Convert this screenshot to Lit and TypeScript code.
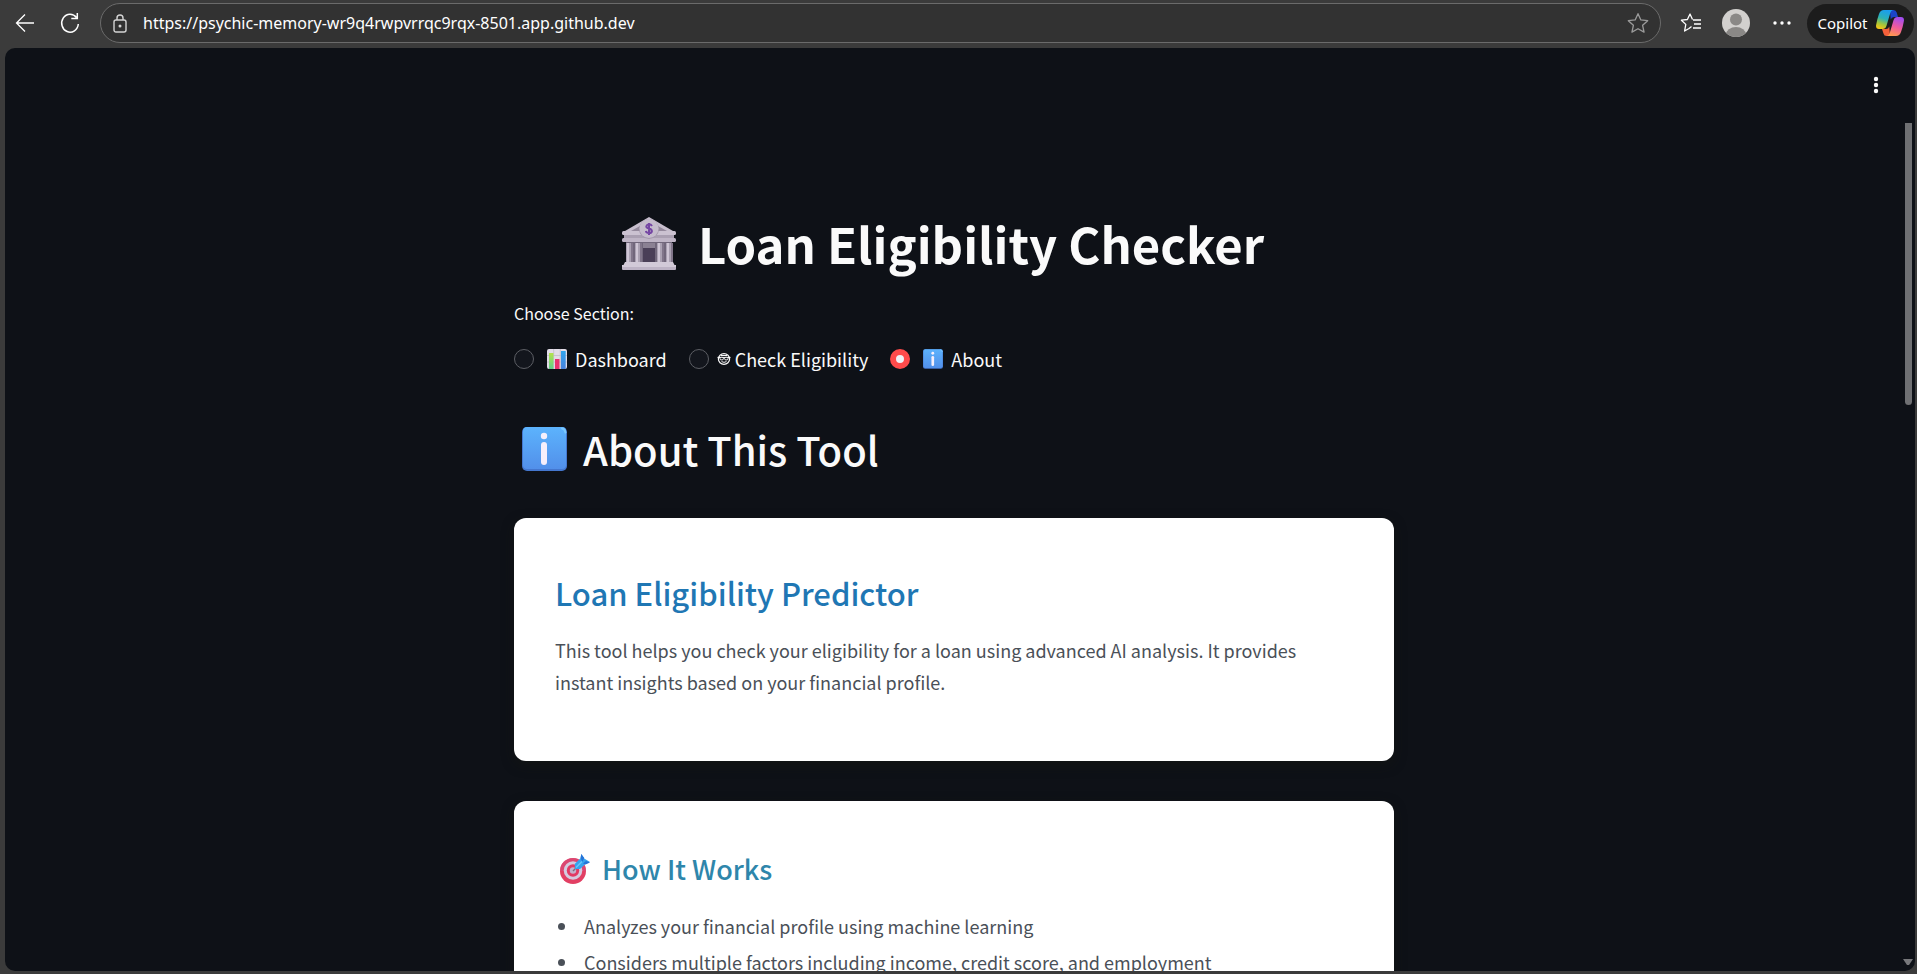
import { LitElement, html, css, svg } from "lit";
import { customElement, state } from "lit/decorators.js";

const infoIcon = html`<svg class="emoji" viewBox="0 0 45 44" aria-hidden="true">
  <defs>
    <linearGradient id="info-face" x1="0" y1="0" x2="0" y2="1">
      <stop offset="0" stop-color="#5cb3fd" />
      <stop offset="1" stop-color="#5290ea" />
    </linearGradient>
  </defs>
  <rect width="45" height="44" rx="5" fill="#4477cf" />
  <rect x="1" width="43" height="42" rx="4" fill="url(#info-face)" />
  <path d="M40 1.5q3 .5 3.500 4" stroke="#7cc9ff" stroke-width="2" fill="none" stroke-linecap="round" />
  <circle cx="22" cy="9" r="3.200" fill="#f6effb" />
  <rect x="19" y="15" width="6" height="23" rx="3" fill="#f6effb" />
</svg>`;

const chartIcon = html`<svg class="emoji" viewBox="0 0 20 20" aria-hidden="true">
  <defs>
    <linearGradient id="bar-green" x1="0" y1="0" x2="0" y2="1">
      <stop offset="0" stop-color="#b4e34c" />
      <stop offset="1" stop-color="#5fd08a" />
    </linearGradient>
    <linearGradient id="bar-blue" x1="0" y1="0" x2="0" y2="1">
      <stop offset="0" stop-color="#2fa5ee" />
      <stop offset="1" stop-color="#4a83dc" />
    </linearGradient>
  </defs>
  <rect width="20" height="20" rx="2" fill="#e2dde8" />
  <path d="M0 6.500h20M0 13h20M6.700 0v20M13.300 0v20" stroke="#c3bccb" stroke-width=".8" />
  <rect x="2" y="4" width="4.500" height="16" fill="url(#bar-green)" />
  <rect x="8" y="10" width="4.500" height="10" fill="#e8336f" />
  <rect x="14" y="2" width="4.700" height="18" fill="url(#bar-blue)" />
</svg>`;

const faceIcon = html`<svg class="face" viewBox="0 0 14 12" aria-hidden="true">
  <ellipse cx="7" cy="6" rx="5.600" ry="5.300" fill="none" stroke="#fafafa" stroke-width="1.200" />
  <path d="M.5 4.500h13" stroke="#fafafa" stroke-width="1.200" />
  <rect x="3" y="4.300" width="3.400" height="2.600" rx="1.200" fill="#0e1117" stroke="#fafafa" />
  <rect x="7.600" y="4.300" width="3.400" height="2.600" rx="1.200" fill="#0e1117" stroke="#fafafa" />
  <path d="M4.500 8.600q2.500 1.500 5 0M4 2.500h6" fill="none" stroke="#fafafa" />
</svg>`;

const column = (x: number) => svg`
  <rect x=${x} y="26" width="6" height="20" fill="#aaa1b2" />
  <rect x=${x + 1} y="26" width="2" height="20" fill="#cfc6d5" />
  <rect x=${x + 5} y="26" width="2" height="20" fill="#81768a" />`;

const bankIcon = html`<svg class="emoji" viewBox="0 0 54 53" aria-hidden="true">
  <rect x="4" y="24" width="46" height="23" fill="#71677b" />
  ${column(4)}${column(13)}${column(35)}${column(44)}
  <rect x="21" y="26" width="12" height="20" fill="#8b8193" />
  <rect x="21" y="31" width="12" height="15" fill="#4a3f57" />
  <path d="M27 0 51 14H3z" fill="#c8bfce" />
  <path d="M27 4 45 14H9z" fill="#94899c" />
  <rect y="14" width="54" height="4" rx="1.500" fill="#cbc2d1" />
  <rect x="2" y="18" width="50" height="4" fill="#aaa0b2" />
  <rect y="21" width="54" height="4" rx="1.500" fill="#bfb5c6" />
  <circle cx="27" cy="12" r="10" fill="#a499ad" />
  <circle cx="27" cy="11.500" r="9.500" fill="#c5bccc" />
  <path d="M30 9q-1-1.700-3-1.700t-2.700 2q0 1.700 2.700 2.300t2.900 2.500q-.2 2-2.900 2t-3.200-2M27 6v12" fill="none" stroke="#7546a4" stroke-width="2" />
  <path d="M3 45h48l2 4H1z" fill="#d2cad8" />
  <rect y="48" width="54" height="5" rx="1" fill="#bdb3c5" />
  <rect y="48" width="54" height="2" fill="#d2cad8" />
</svg>`;

const targetIcon = html`<svg class="emoji" viewBox="0 0 30 30" aria-hidden="true">
  <circle cx="13" cy="17" r="13" fill="#e23f63" />
  <path d="M0 17a13 13 0 0 1 26 0z" fill="#d94a78" opacity=".7" />
  <circle cx="13" cy="16.500" r="9.300" fill="#d5cadf" />
  <circle cx="13" cy="16.500" r="6.200" fill="#e23a64" />
  <circle cx="13" cy="16.500" r="3.200" fill="#c4b2cd" />
  <path d="m13 17 7-7" stroke="#76707f" stroke-width="1.500" />
  <path d="m15 15-.3-5 6-6 .5-4 3 4.500L30 8l-4.500 2-5.500 5z" fill="#35a3ee" />
  <path d="m20.500 4 .8-4 3 4-2 4zM23 9.500l3-2.500 4 1.500-4.500 2z" fill="#2574d8" />
  <path d="m16 13.500 6-6" stroke="#67c8fa" stroke-width="1.500" />
</svg>`;

const copilotIcon = html`<svg class="copilot-logo" viewBox="0 0 28 26" aria-hidden="true">
  <defs>
    <linearGradient id="cp-left" x1=".6" y1="0" x2=".3" y2="1">
      <stop offset="0" stop-color="#1a9df0" />
      <stop offset=".45" stop-color="#2bb1b6" />
      <stop offset=".75" stop-color="#a4c63a" />
      <stop offset="1" stop-color="#f5c518" />
    </linearGradient>
    <linearGradient id="cp-right" x1=".6" y1="0" x2=".3" y2="1">
      <stop offset="0" stop-color="#a24df0" />
      <stop offset=".5" stop-color="#ee5a9d" />
      <stop offset="1" stop-color="#ff9a4d" />
    </linearGradient>
  </defs>
  <path d="M14 0h3.500q2.500 0 3.200 2.500L22 7h-4q-2.500 0-3.300 2.500z" fill="#1b45c9" />
  <path d="M14 26h-3.500q-2.500 0-3-2.500L6 19h4q2.500 0 3.300-2.500z" fill="#f4603a" />
  <path d="M8 0h9q-2 .5-2.800 3.300l-3.700 12.500Q9.500 19 6.500 19H3Q-.7 19 .2 14.500 1 9.500 3 4 4.300 0 8 0z" fill="url(#cp-left)" />
  <path d="M20 26h-9q2-.5 2.800-3.300l3.700-12.500Q18.500 7 21.500 7H25q3.700 0 2.800 4.500-.8 5-2.800 10.500-1.300 4-5 4z" fill="url(#cp-right)" />
</svg>`;

const starPath = "m10 1.500 2.600 5.700 6.200.7-4.600 4.200 1.300 6.200L10 15.200l-5.500 3.100 1.300-6.200L1.200 7.900l6.200-.7z";

const sections = [
  { id: "dashboard", label: "Dashboard", icon: chartIcon, tight: false },
  { id: "check", label: "Check Eligibility", icon: faceIcon, tight: true },
  { id: "about", label: "About", icon: infoIcon, tight: false },
];

@customElement("browser-bar")
class BrowserBar extends LitElement {
  static styles = css`
    :host {
      display: flex;
      align-items: center;
      height: 48px;
      padding: 0 3px 2px 8px;
      box-sizing: border-box;
      color: #fff;
      font-family: "Noto Sans", sans-serif;
    }
    button {
      display: flex;
      align-items: center;
      justify-content: center;
      flex: none;
      border: 0;
      padding: 0;
      background: none;
      color: inherit;
      font: inherit;
    }
    svg { display: block; fill: none; stroke: currentColor; }
    .nav { width: 34px; height: 34px; margin-right: 11px; }
    .address {
      display: flex;
      align-items: center;
      flex: 1;
      height: 40px;
      box-sizing: border-box;
      margin-left: 2px;
      padding: 0 11px 0 8px;
      border: 1px solid #6b6b6b;
      border-radius: 20px;
      background: #323232;
    }
    .lock { width: 22px; color: #d4d4d4; }
    .url {
      flex: 1;
      min-width: 0;
      margin-left: 12px;
      border: 0;
      padding: 0;
      background: none;
      color: #fff;
      font: 16px/24px "Noto Sans", sans-serif;
      outline: 0;
    }
    .star { color: #9a9a9a; }
    .tools { display: flex; align-items: center; gap: 20px; margin: 0 13px 0 19px; }
    .copilot {
      width: 107px;
      height: 39px;
      gap: 8px;
      border-radius: 20px;
      background: #1c1c1c;
      font-size: 15px;
    }
    .copilot-logo { width: 28px; height: 26px; stroke: none; }
  `;

  render() {
    return html`
      <button class="nav" aria-label="Back">
        <svg width="20" height="20" viewBox="0 0 20 20" stroke-width="1.300"><path d="M19 10H1.500M10 1.500 1.500 10l8.500 8.500" /></svg>
      </button>
      <button class="nav" aria-label="Refresh">
        <svg width="20" height="22" viewBox="0 0 20 22" stroke-width="1.500"><path d="M16.500 5.500A8.300 9 0 1 0 18.300 12M17.300 1v5.500h-6" /></svg>
      </button>
      <div class="address">
        <button class="lock" aria-label="Site information">
          <svg width="14" height="19" viewBox="0 0 14 19" stroke-width="1.400"><rect x="1" y="6" width="12" height="12" rx="2" /><path d="M4 6V4a3 3 0 0 1 6 0v2" /><circle cx="7" cy="12" r=".8" fill="currentColor" /></svg>
        </button>
        <input class="url" aria-label="Address" value="https://psychic-memory-wr9q4rwpvrrqc9rqx-8501.app.github.dev" />
        <button class="star" aria-label="Add to favorites">
          <svg width="22" height="22" viewBox="0 0 20 20" stroke-width="1.200" stroke-linejoin="round"><path d=${starPath} /></svg>
        </button>
      </div>
      <div class="tools">
        <button aria-label="Favorites">
          <svg width="22" height="22" viewBox="0 0 22 22" stroke-width="1.300" stroke-linejoin="round"><path d="M13 8h8M14 12h7M13 16h8M12.500 7.500 10 2 7.400 7.500l-6 .7 4.400 4.200L4.600 19l4.400-2.500 2.500-2" /></svg>
        </button>
        <button aria-label="Profile">
          <svg width="28" height="28" viewBox="0 0 28 28" stroke="none">
            <clipPath id="avatar"><circle cx="14" cy="14" r="14" /></clipPath>
            <g clip-path="url(#avatar)" stroke="none"><rect width="28" height="28" fill="#d2d0ce" /><circle cx="14" cy="10.500" r="6" fill="#8a8886" /><ellipse cx="14" cy="25.500" rx="10" ry="7.500" fill="#8a8886" /></g>
          </svg>
        </button>
        <button aria-label="Settings and more">
          <svg width="24" height="20" viewBox="0 0 24 20"><g fill="#fff" stroke="none"><circle cx="5" cy="10" r="1.700" /><circle cx="12" cy="10" r="1.700" /><circle cx="19" cy="10" r="1.700" /></g></svg>
        </button>
      </div>
      <button class="copilot"><span>Copilot</span>${copilotIcon}</button>
    `;
  }
}

@customElement("app-root")
class AppRoot extends LitElement {
  @state() private section = "about";

  static styles = css`
    :host {
      display: flex;
      flex-direction: column;
      height: 100vh;
      overflow: hidden;
      background: #3b3b3b;
      color: #fafafa;
      font-family: "Noto Sans CJK SC", "Noto Sans", sans-serif;
    }
    .frame {
      display: flex;
      flex: 1;
      min-height: 0;
      margin: 0 2px 3px 5px;
      border-radius: 10px;
      overflow: hidden;
      background: #0e1117;
    }
    .app { flex: 1; min-width: 0; overflow: hidden; }
    .header { display: flex; justify-content: flex-end; padding: 22px 12px 0 0; }
    .menu {
      display: flex;
      align-items: center;
      justify-content: center;
      width: 30px;
      height: 30px;
      border: 0;
      padding: 0;
      background: none;
    }
    .scrollbar {
      display: flex;
      flex-direction: column;
      align-items: center;
      justify-content: space-between;
      width: 12px;
      flex: none;
      box-sizing: border-box;
      padding: 75px 2px 6px 0;
    }
    .thumb { width: 7px; height: 282px; border-radius: 0 0 4px 4px; background: #6f7073; }
    .content { max-width: 880px; margin: 0 auto; padding-top: 110px; }
    .emoji { display: block; flex: none; }
    h1, h2, h3, h4 { display: flex; align-items: center; margin: 0; font-weight: 500; }
    h1 { justify-content: center; gap: 22px; padding-right: 22px; font-size: 49px; line-height: 66px; font-weight: 700; }
    h1 .emoji { width: 54px; height: 53px; }
    h2 { gap: 16px; margin-top: 44px; padding-left: 8px; font-size: 40px; line-height: 60px; }
    h2 .emoji { width: 45px; height: 44px; }
    h3 { font-size: 31px; line-height: 42px; color: #1f77b4; }
    h4 { gap: 12px; padding-left: 5px; font-size: 27px; line-height: 36px; color: #2e86ab; }
    h4 .emoji { width: 30px; height: 30px; }
    .sections { margin: 24px 0 0; border: 0; padding: 0; min-width: 0; }
    .legend { padding: 0; font-size: 16px; line-height: 26px; }
    .options { display: flex; gap: 22px; margin-top: 17px; }
    .option { display: flex; align-items: center; gap: 8px; font-size: 18px; line-height: 32px; }
    .option.tight { gap: 4px; }
    .option .emoji { width: 20px; height: 20px; margin-left: 5px; }
    .option .face { width: 14px; height: 12px; margin-left: 4px; }
    .radio {
      appearance: none;
      flex: none;
      width: 20px;
      height: 20px;
      margin: 0;
      border: 1px solid #5c5e64;
      border-radius: 50%;
      background: #13161d;
    }
    .radio:checked { border: 6px solid #ff4b4b; background: #f0f2f6; }
    .card {
      margin-bottom: 40px;
      border-radius: 12px;
      padding: 54px 41px 63px;
      background: #fff;
      color: #4a5058;
      font-size: 18px;
      line-height: 32px;
      box-shadow: 0 4px 12px rgb(20 22 16 / 60%);
    }
    .card:first-of-type { margin-top: 39px; }
    .card p { margin: 20px 0 0; }
    .works { padding-top: 50px; }
    .card ul { margin: 21px 0 0; padding: 0; line-height: 36px; list-style: none; }
    .card li { display: flex; align-items: center; gap: 19px; padding-left: 3px; }
    .card li::before { content: ""; flex: none; width: 7px; height: 7px; border-radius: 50%; background: currentColor; }
  `;

  render() {
    return html`
      <browser-bar></browser-bar>
      <div class="frame">
        <div class="app">
          <header class="header">
            <button class="menu" aria-label="Main menu">
              <svg width="6" height="18" viewBox="0 0 6 18" fill="#fafafa"><circle cx="3" cy="3" r="2.200" /><circle cx="3" cy="9" r="2.200" /><circle cx="3" cy="15" r="2.200" /></svg>
            </button>
          </header>
          <main class="content">
            <h1>${bankIcon}<span>Loan Eligibility Checker</span></h1>
            <fieldset class="sections">
              <legend class="legend">Choose Section:</legend>
              <div class="options">
                ${sections.map(
                  (s) => html`<label class="option ${s.tight ? "tight" : ""}">
                    <input
                      class="radio"
                      type="radio"
                      name="section"
                      .checked=${this.section === s.id}
                      @change=${() => (this.section = s.id)}
                    />${s.icon}<span>${s.label}</span>
                  </label>`
                )}
              </div>
            </fieldset>
            <h2>${infoIcon}<span>About This Tool</span></h2>
            <section class="card">
              <h3>Loan Eligibility Predictor</h3>
              <p>
                This tool helps you check your eligibility for a loan using advanced AI analysis. It provides
                instant insights based on your financial profile.
              </p>
            </section>
            <section class="card works">
              <h4>${targetIcon}<span>How It Works</span></h4>
              <ul>
                <li>Analyzes your financial profile using machine learning</li>
                <li>Considers multiple factors including income, credit score, and employment</li>
              </ul>
            </section>
          </main>
        </div>
        <div class="scrollbar" aria-hidden="true">
          <div class="thumb"></div>
          <svg width="10" height="6" viewBox="0 0 10 6"><path d="M0 0h10L6 6H4z" fill="#77787b" /></svg>
        </div>
      </div>
    `;
  }
}
